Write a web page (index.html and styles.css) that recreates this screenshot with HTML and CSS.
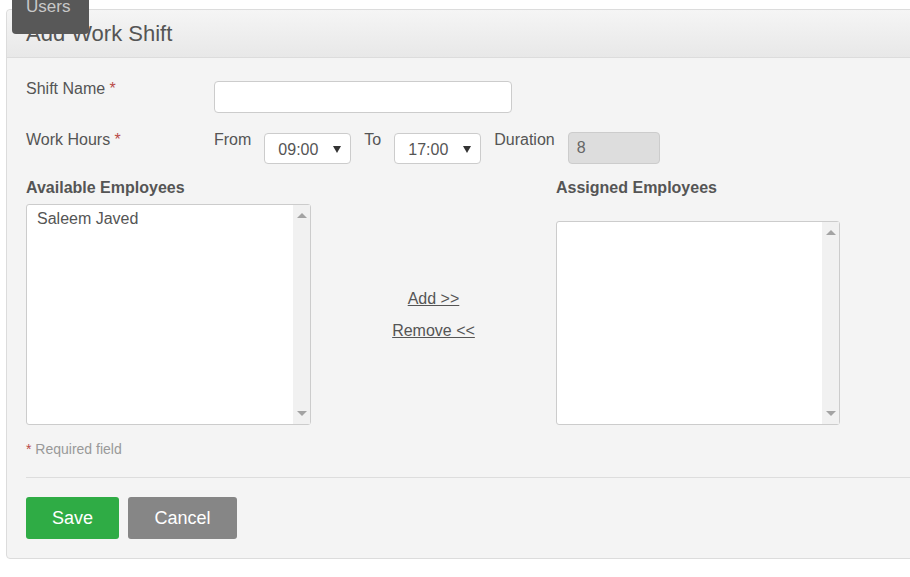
FILE: index.html
```html
<!DOCTYPE html>
<html>
<head>
<meta charset="utf-8">
<link rel="stylesheet" href="styles.css">
</head>
<body>
<div class="page">
  <div class="tip">Users</div>
  <div class="panel">
    <div class="panel-head">Add Work Shift</div>
    <div class="panel-body">
      <div class="row row-name">
        <div class="label">Shift Name <span class="req">*</span></div>
        <div class="text-input"></div>
      </div>
      <div class="row row-hours">
        <div class="label">Work Hours <span class="req">*</span></div>
        <div class="hours">
          <span class="inline-label">From</span>
          <div class="select"><span>09:00</span><span class="caret"></span></div>
          <span class="inline-label">To</span>
          <div class="select"><span>17:00</span><span class="caret"></span></div>
          <span class="inline-label">Duration</span>
          <div class="duration">8</div>
        </div>
      </div>
      <div class="lists">
        <div class="list-col">
          <div class="list-title">Available Employees</div>
          <div class="listbox listbox-left">
            <div class="list-items"><div class="item">Saleem Javed</div></div>
            <div class="scrollbar"><span class="arrow-up"></span><span class="arrow-down"></span></div>
          </div>
        </div>
        <div class="mid-col">
          <a class="link" href="#">Add &gt;&gt;</a>
          <a class="link" href="#">Remove &lt;&lt;</a>
        </div>
        <div class="list-col">
          <div class="list-title">Assigned Employees</div>
          <div class="listbox listbox-right">
            <div class="list-items"></div>
            <div class="scrollbar"><span class="arrow-up"></span><span class="arrow-down"></span></div>
          </div>
        </div>
      </div>
      <div class="required"><span class="req">*</span> Required field</div>
      <div class="rule"></div>
      <div class="actions">
        <button class="btn btn-save">Save</button>
        <button class="btn btn-cancel">Cancel</button>
      </div>
    </div>
  </div>
</div>
</body>
</html>
```

FILE: styles.css
```css
html, body {
  margin: 0;
  padding: 0;
  background: #fff;
  overflow: hidden;
  width: 910px;
  height: 577px;
}
body {
  font-family: "Liberation Sans", Arial, sans-serif;
  color: #555;
}
.page {
  position: relative;
  padding: 9px 0 0 6px;
}
.tip {
  position: absolute;
  left: 12px;
  top: 0;
  width: 77px;
  height: 34px;
  background: #585858;
  border-radius: 0 0 4px 4px;
  color: #c8c8c8;
  font-size: 17px;
  line-height: 14px;
  padding-left: 14px;
  box-sizing: border-box;
  overflow: hidden;
  z-index: 2;
}
.panel {
  width: 960px;
  border: 1px solid #dcdcdc;
  border-radius: 4px;
  background: #f4f4f4;
  box-sizing: border-box;
}
.panel-head {
  height: 48px;
  box-sizing: border-box;
  border-bottom: 1px solid #dcdcdc;
  background: linear-gradient(#f5f5f5, #e8e8e8);
  font-size: 22px;
  line-height: 47px;
  padding-left: 19px;
  color: #555;
  border-radius: 4px 4px 0 0;
}
.panel-body {
  padding: 21px 0 19px 19px;
}
.row {
  display: flex;
  align-items: flex-start;
}
.label {
  width: 188px;
  font-size: 16px;
  line-height: 20px;
}
.req {
  color: #b94a48;
}
.text-input {
  margin-top: 2px;
  width: 298px;
  height: 32px;
  box-sizing: border-box;
  background: #fff;
  border: 1px solid #ccc;
  border-radius: 4px;
}
.row-hours {
  margin-top: 17px;
}
.hours {
  display: flex;
  align-items: flex-start;
  gap: 13px;
}
.inline-label {
  font-size: 16px;
  line-height: 20px;
}
.select {
  margin-top: 3px;
  width: 87px;
  height: 31px;
  box-sizing: border-box;
  background: #fff;
  border: 1px solid #ccc;
  border-radius: 4px;
  display: flex;
  align-items: center;
  justify-content: space-between;
  padding: 2px 9px 0 13px;
  font-size: 16px;
}
.caret {
  width: 0;
  height: 0;
  border-left: 4px solid transparent;
  border-right: 4px solid transparent;
  border-top: 7px solid #333;
  margin-top: -1px;
}
.duration {
  margin-top: 2px;
  width: 92px;
  height: 32px;
  box-sizing: border-box;
  background: #ddd;
  border: 1px solid #ccc;
  border-radius: 4px;
  font-size: 16px;
  line-height: 30px;
  padding-left: 8px;
  color: #666;
}
.lists {
  margin-top: 14px;
  display: flex;
  align-items: flex-start;
}
.list-col {
  display: flex;
  flex-direction: column;
}
.list-title {
  font-size: 16px;
  font-weight: bold;
  line-height: 20px;
}
.listbox {
  display: flex;
  background: #fff;
  border: 1px solid #ccc;
  border-radius: 3px;
  box-sizing: border-box;
}
.listbox-left {
  margin-top: 6px;
  width: 285px;
  height: 221px;
}
.listbox-right {
  margin-top: 23px;
  width: 284px;
  height: 204px;
}
.list-items {
  flex: 1;
  padding: 4px 10px;
}
.item {
  font-size: 16px;
  line-height: 20px;
}
.scrollbar {
  width: 17px;
  background: #f1f1f1;
  display: flex;
  flex-direction: column;
  justify-content: space-between;
  align-items: center;
  padding: 8px 0;
}
.arrow-up {
  width: 0;
  height: 0;
  border-left: 5px solid transparent;
  border-right: 5px solid transparent;
  border-bottom: 5px solid #a3a3a3;
}
.arrow-down {
  width: 0;
  height: 0;
  border-left: 5px solid transparent;
  border-right: 5px solid transparent;
  border-top: 5px solid #a3a3a3;
}
.mid-col {
  width: 245px;
  height: 221px;
  margin-top: 26px;
  display: flex;
  flex-direction: column;
  align-items: center;
  justify-content: center;
  gap: 12px;
}
.link {
  color: #555;
  font-size: 16px;
  line-height: 20px;
  text-decoration: underline;
}
.required {
  margin-top: 16px;
  font-size: 14px;
  line-height: 16px;
  color: #999;
}
.rule {
  margin-top: 20px;
  border-top: 1px solid #ddd;
}
.actions {
  margin-top: 19px;
  display: flex;
  gap: 9px;
}
.btn {
  height: 42px;
  border: none;
  border-radius: 3px;
  color: #fff;
  font-family: "Liberation Sans", Arial, sans-serif;
  font-size: 18px;
  padding: 0;
}
.btn-save {
  width: 93px;
  background: #2fac45;
}
.btn-cancel {
  width: 109px;
  background: #868686;
}
```
